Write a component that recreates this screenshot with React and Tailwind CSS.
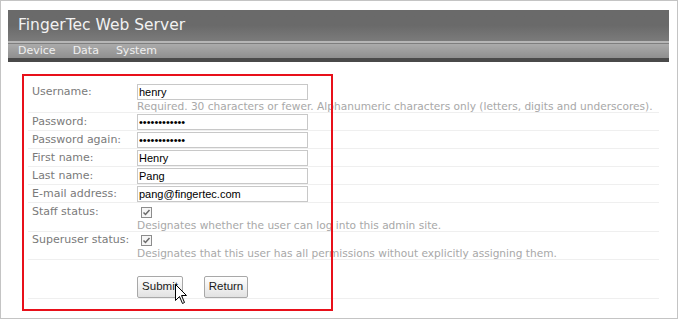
import React from 'react';

const labelFont = { fontFamily: '"DejaVu Sans", Verdana, sans-serif' };
const inputFont = { fontFamily: '"Liberation Sans", Arial, sans-serif' };

const CheckBox = () => (
  <svg width="11" height="11" viewBox="0 0 11 11" className="block">
    <rect x="0.5" y="0.5" width="10" height="10" fill="#f6f6f6" stroke="#8c8c8c" />
    <path d="M2.5 5.5 L4.5 7.5 L8.5 3" fill="none" stroke="#6a6a6a" strokeWidth="1.5" />
  </svg>
);

const TextRow = ({ label, value, type = 'text', help }) => (
  <div className="flex border-b border-[#efefef] pt-[1px]">
    <div className="w-[109px] shrink-0 pl-[4px] text-[11px] leading-[16px] text-[#7a7a7a]" style={labelFont}>
      {label}
    </div>
    <div>
      <input
        type={type}
        readOnly
        value={value}
        className="block w-[171px] h-[16px] border border-[#c8c8c8] bg-white px-[1px] text-[11px] leading-[14px] text-black outline-none"
        style={inputFont}
      />
      {help && (
        <div className="text-[10.6px] leading-[12px] text-[#a8a8a8] whitespace-nowrap" style={labelFont}>
          {help}
        </div>
      )}
    </div>
  </div>
);

const CheckRow = ({ label, help, pad }) => (
  <div className={`flex border-b border-[#efefef] ${pad}`}>
    <div className="w-[109px] shrink-0 pl-[4px] text-[11px] leading-[14px] text-[#7a7a7a]" style={labelFont}>
      {label}
    </div>
    <div>
      <div className="h-[14px] pl-[4px] flex items-center">
        <CheckBox />
      </div>
      <div className="text-[10.6px] leading-[12px] text-[#a8a8a8] whitespace-nowrap" style={labelFont}>
        {help}
      </div>
    </div>
  </div>
);

const Button = ({ children, w }) => (
  <button
    className={`${w} h-[22px] border border-[#a8a8a8] rounded-[2px] bg-gradient-to-b from-white to-[#e2e2e2] text-[11.5px] text-[#1a1a1a]`}
    style={inputFont}
  >
    {children}
  </button>
);

export default function App() {
  return (
    <div className="relative w-[680px] h-[320px] bg-white overflow-hidden">
      <div className="w-[678px] h-[319px] border border-[#c4c4c4]">
        {/* Header */}
        <div className="ml-[7px] mt-[9px] w-[661px]">
          <div
            className="h-[31px] pl-[10px] flex items-center bg-gradient-to-b from-[#6a6a6a] via-[#6a6a6a] to-[#7b7b7b] text-[15.5px] text-[#f2f2f2]"
            style={labelFont}
          >
            FingerTec Web Server
          </div>
          <div className="h-[2px] bg-[#b6b6b6]" />
          <div className="h-[1px] bg-[#7e7e7e]" />
          <div
            className="h-[14px] pl-[10px] flex items-center gap-[17px] bg-gradient-to-b from-[#ababab] to-[#8f8f8f] text-[11px] text-[#f0f0f0]"
            style={labelFont}
          >
            <span>Device</span>
            <span>Data</span>
            <span>System</span>
          </div>
          <div className="h-[4px] bg-[#4a4a4a]" />
        </div>

        {/* Form */}
        <div className="ml-[27px] mt-[21px] w-[631px]">
          <TextRow
            label="Username:"
            value="henry"
            help="Required. 30 characters or fewer. Alphanumeric characters only (letters, digits and underscores)."
          />
          <TextRow label="Password:" value="abcdefghijkl" type="password" />
          <TextRow label="Password again:" value="abcdefghijkl" type="password" />
          <TextRow label="First name:" value="Henry" />
          <TextRow label="Last name:" value="Pang" />
          <TextRow label="E-mail address:" value="pang@fingertec.com" />
          <CheckRow
            label="Staff status:"
            help="Designates whether the user can log into this admin site."
            pad="pt-[2px]"
          />
          <CheckRow
            label="Superuser status:"
            help="Designates that this user has all permissions without explicitly assigning them."
            pad="pt-[1px]"
          />
          <div className="flex border-b border-[#efefef] pt-[16px] pl-[109px] gap-[21px]">
            <Button w="w-[46px]">Submit</Button>
            <Button w="w-[44px]">Return</Button>
          </div>
        </div>
      </div>

      {/* red highlight annotation */}
      <div className="absolute left-[22px] top-[74px] w-[311px] h-[237px] border-2 border-[#e8101a] pointer-events-none" />

      {/* mouse pointer */}
      <svg className="absolute left-[175px] top-[284px]" width="13" height="21" viewBox="0 0 13 21">
        <path
          d="M0.5 0.5 V16.5 L4.5 12.5 L7.5 19.5 L9.5 18.5 L6.5 11.5 H11.5 Z"
          fill="white"
          stroke="black"
          strokeWidth="1"
          strokeLinejoin="miter"
        />
      </svg>
    </div>
  );
}
